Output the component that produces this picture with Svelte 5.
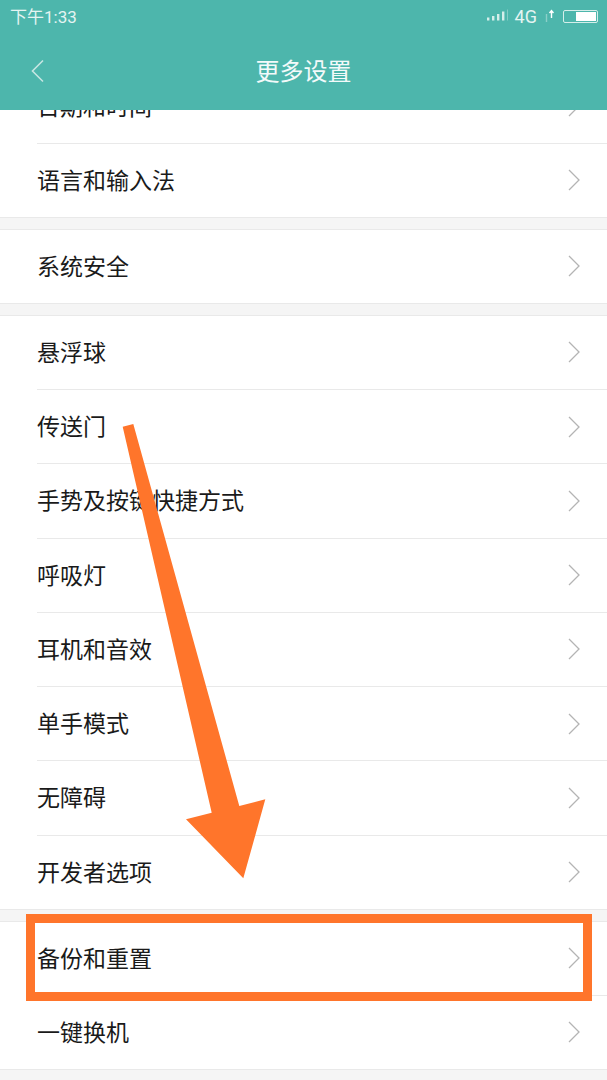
<script lang="ts">
  const groups = [
    ['日期和时间', '语言和输入法'],
    ['系统安全'],
    ['悬浮球', '传送门', '手势及按键快捷方式', '呼吸灯', '耳机和音效', '单手模式', '无障碍', '开发者选项'],
    ['备份和重置', '一键换机']
  ];
</script>

<div class="screen">
  <header class="top">
    <div class="status">
      <span class="time">下午1:33</span>
      <div class="status-right">
        <svg width="23" height="14" viewBox="0 0 23 14" fill="#d5eeea">
          <rect x="0" y="8.5" width="2.4" height="3" />
          <rect x="5" y="7" width="2.4" height="4.5" />
          <rect x="10" y="5" width="2.4" height="6.5" />
          <rect x="15" y="2.5" width="2.4" height="9" />
          <rect x="20" y="0.5" width="1" height="11" opacity="0.4" />
        </svg>
        <span class="net">4G</span>
        <svg width="12" height="14" viewBox="0 0 12 14" fill="none" stroke="#fff" stroke-width="1.4">
          <path d="M4.5 13V5" opacity="0.35" />
          <path d="M9.5 9V1.5M7.5 4l2-2.5 2 2.5" />
        </svg>
        <div class="battery"><div class="battery-fill"></div></div>
      </div>
    </div>
    <div class="bar">
      <svg class="back" width="14" height="24" viewBox="0 0 14 24" fill="none" stroke="#c6e6e2" stroke-width="1.6">
        <path d="M12 1.5L1.5 12 12 22.5" />
      </svg>
      <h1>更多设置</h1>
    </div>
  </header>

  <main class="list">
    {#each groups as group}
      <section class="group">
        {#each group as label}
          <div class="row">
            <span class="label">{label}</span>
            <svg class="chev" width="12" height="22" viewBox="0 0 12 22" fill="none" stroke="#b4b4b4" stroke-width="1.3">
              <path d="M1 1l10 10L1 21" />
            </svg>
          </div>
        {/each}
      </section>
    {/each}
  </main>

  <!-- annotation drawn over the screenshot -->
  <div class="mark"></div>
  <svg class="arrow" width="607" height="1080" viewBox="0 0 607 1080">
    <polygon points="122.7,426.7 133.3,424 239.3,806 265.3,799.3 243.3,878.3 186,819.3 211.7,812.7" fill="#ff752b" />
  </svg>
</div>

<style>
  :global(body) {
    margin: 0;
    background: #f5f5f5;
  }

  .screen {
    position: relative;
    width: 607px;
    height: 1080px;
    overflow: hidden;
    display: flex;
    flex-direction: column;
    font-family: "Noto Sans CJK SC", "Noto Sans", sans-serif;
  }

  .top {
    flex: none;
    position: relative;
    z-index: 1;
    height: 110px;
    background: #4db6ac;
    color: #fff;
    display: flex;
    flex-direction: column;
  }

  .status {
    height: 32px;
    padding: 0 9px 0 10px;
    display: flex;
    align-items: center;
    justify-content: space-between;
  }

  .time {
    font-family: "Roboto", "Noto Sans CJK SC", sans-serif;
    font-size: 17px;
    color: #e4f4f2;
    padding-bottom: 2px;
  }

  .status-right {
    display: flex;
    align-items: center;
    gap: 5px;
  }

  .net {
    font-family: "Roboto", sans-serif;
    font-size: 18px;
    color: #e4f4f2;
  }

  .battery {
    width: 35px;
    height: 13px;
    margin-left: 4px;
    box-sizing: border-box;
    border: 1px solid #d5eeea;
    border-radius: 2px;
    padding: 1px;
    display: flex;
    justify-content: flex-end;
  }

  .battery-fill {
    width: 20px;
    background: #fff;
  }

  .bar {
    flex: 1;
    display: grid;
    grid-template-columns: 1fr auto 1fr;
    align-items: center;
    padding: 0 31px;
  }

  h1 {
    margin: 0 0 3px;
    font-size: 24px;
    font-weight: 400;
    color: #f3fafa;
  }

  .list {
    flex: 1;
    min-height: 0;
    overflow: hidden;
    display: flex;
    flex-direction: column;
    justify-content: flex-end;
    gap: 10.75px;
    padding-bottom: 10px;
  }

  .group {
    flex: none;
    background: #fff;
    border-top: 1px solid #e9e9e9;
    padding-left: 37px;
  }

  .row {
    height: 74.25px;
    box-sizing: border-box;
    border-bottom: 1px solid #e9e9e9;
    display: flex;
    align-items: center;
    justify-content: space-between;
    padding-right: 27px;
    font-size: 23px;
    color: #1a1a1a;
  }

  .row:last-child {
    margin-left: -37px;
    padding-left: 37px;
  }

  .label {
    padding-bottom: 3px;
  }

  .mark {
    position: absolute;
    z-index: 2;
    left: 26px;
    top: 914px;
    width: 566px;
    height: 87px;
    box-sizing: border-box;
    border: 9px solid #ff752b;
  }

  .arrow {
    position: absolute;
    z-index: 2;
    left: 0;
    top: 0;
  }
</style>
